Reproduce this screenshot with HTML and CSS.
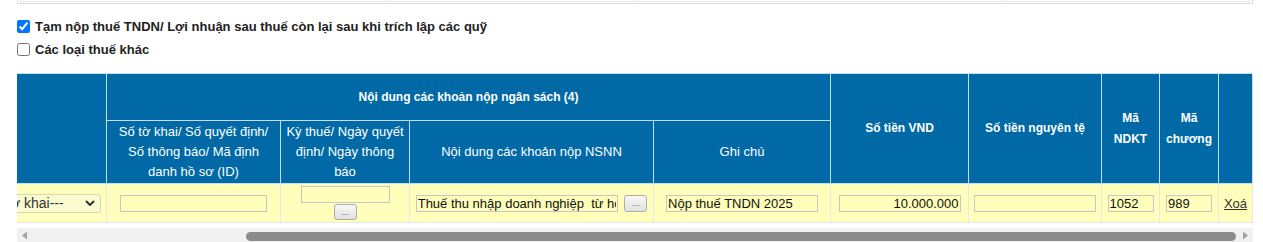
FILE: index.html
```html
<!DOCTYPE html>
<html lang="vi">
<head>
  <meta charset="UTF-8" />
  <title>Nộp thuế</title>
  <link rel="stylesheet" href="styles.css">
</head>
<body>
  <div class="page">
    <div class="prev-table">
      <div class="prev-cell c-a"></div>
      <div class="prev-cell c-b"></div>
      <div class="prev-cell c-c"></div>
      <div class="prev-cell c-d"></div>
    </div>

    <div class="options">
      <label class="opt"><input type="checkbox" checked> Tạm nộp thuế TNDN/ Lợi nhuận sau thuế còn lại sau khi trích lập các quỹ</label>
      <label class="opt"><input type="checkbox"> Các loại thuế khác</label>
    </div>

    <div class="grid-wrap">
      <table class="grid">
        <colgroup>
          <col style="width:40px">
          <col style="width:320px">
          <col style="width:174px">
          <col style="width:129px">
          <col style="width:244px">
          <col style="width:177px">
          <col style="width:138px">
          <col style="width:133px">
          <col style="width:58px">
          <col style="width:59px">
          <col style="width:34px">
        </colgroup>
        <thead>
          <tr class="head-top">
            <th rowspan="2" class="bold">STT</th>
            <th rowspan="2" class="bold"></th>
            <th colspan="4" class="bold">Nội dung các khoản nộp ngân sách (4)</th>
            <th rowspan="2" class="bold">Số tiền VND</th>
            <th rowspan="2" class="bold">Số tiền nguyên tệ</th>
            <th rowspan="2" class="bold">Mã<br>NDKT</th>
            <th rowspan="2" class="bold">Mã<br>chương</th>
            <th rowspan="2"></th>
          </tr>
          <tr class="head-sub">
            <th class="th-id">Số tờ khai/ Số quyết định/ Số thông báo/ Mã định danh hồ sơ (ID)</th>
            <th>Kỳ thuế/ Ngày quyết định/ Ngày thông báo</th>
            <th>Nội dung các khoản nộp NSNN</th>
            <th>Ghi chú</th>
          </tr>
        </thead>
        <tbody>
          <tr class="data-row">
            <td>1</td>
            <td class="cell-type">
              <select class="type-select">
                <option>---Chọn loại tờ khai---</option>
              </select>
            </td>
            <td><input class="field w-id" type="text" value=""></td>
            <td class="cell-period">
              <input class="field w-period" type="text" value="">
              <button class="pick" type="button">...</button>
            </td>
            <td class="cell-content">
              <input class="field w-content" type="text" value="Thuế thu nhập doanh nghiệp  từ hoạt động sản xuất kinh doanh">
              <button class="pick" type="button">...</button>
            </td>
            <td><input class="field w-note" type="text" value="Nộp thuế TNDN 2025"></td>
            <td><input class="field w-money num" type="text" value="10.000.000"></td>
            <td><input class="field w-money" type="text" value=""></td>
            <td><input class="field w-code" type="text" value="1052"></td>
            <td><input class="field w-code" type="text" value="989"></td>
            <td><a href="#" class="del-link">Xoá</a></td>
          </tr>
        </tbody>
      </table>
    </div>

    <div class="hscroll">
      <span class="sb-arrow">
        <svg width="15" height="15" viewBox="0 0 15 15"><path d="M5 7.5 L10 3.5 L10 11.5 Z" fill="#a3a3a3"/></svg>
      </span>
      <div class="sb-track">
        <div class="sb-thumb"></div>
      </div>
      <span class="sb-arrow">
        <svg width="15" height="15" viewBox="0 0 15 15"><path d="M10 7.5 L5 3.5 L5 11.5 Z" fill="#a3a3a3"/></svg>
      </span>
    </div>
  </div>

  <script src="script.js"></script>
</body>
</html>
```

FILE: styles.css
```css
body {
  margin: 0;
  font-family: "Liberation Sans", Arial, sans-serif;
  font-size: 13px;
  color: #222;
  background: #fff;
}

.page {
  padding: 0 10px 0 17px;
}

/* bottom edge of the block above */
.prev-table {
  display: flex;
  gap: 2px;
  padding: 0 2px 1px 2px;
  border: 1px solid #dcdcdc;
  border-top: 0;
  width: 1230px;
}

.prev-cell {
  height: 1px;
  border: 1px solid #e8e8e8;
  border-top: 0;
}

.c-a { width: 365px; }
.c-b { width: 243px; }
.c-c { width: 366px; }
.c-d { flex: 1; }

.options {
  padding-top: 11px;
}

.opt {
  display: flex;
  align-items: center;
  height: 23px;
  font-weight: bold;
  color: #222;
}

.opt input {
  width: 13px;
  height: 13px;
  margin: 0 5px 0 0;
}

.grid-wrap {
  margin-top: 12px;
  overflow-x: auto;
  scrollbar-width: none;
  padding-bottom: 5px;
  width: 1236px;
}

.grid {
  width: 1506px;
  table-layout: fixed;
  border-collapse: collapse;
}

.grid th {
  background: #0069a6;
  color: #fff;
  font-weight: normal;
  font-size: 13px;
  line-height: 20px;
  border: 1px solid #c2e0f5;
  padding: 1px 3px;
  text-align: center;
  vertical-align: middle;
}

.grid th.th-id {
  padding: 1px 8px;
}

.grid th.bold {
  font-weight: bold;
  font-size: 12px;
  line-height: 21px;
}

.head-top th {
  height: 44px;
}

.head-sub th {
  height: 60px;
}

.grid td {
  background: #ffffbb;
  border: 1px solid #e3e8ea;
  height: 38px;
  padding: 0 3px;
  text-align: center;
  vertical-align: middle;
  white-space: nowrap;
}

.grid td.cell-type {
  text-align: right;
  padding-right: 5px;
}

.type-select {
  appearance: none;
  -webkit-appearance: none;
  height: 19px;
  padding: 0 36px 0 4px;
  font-family: "Liberation Sans", Arial, sans-serif;
  font-size: 14px;
  color: #333;
  background: #fbfbd0 url("data:image/svg+xml;utf8,<svg xmlns='http://www.w3.org/2000/svg' width='10' height='6'><path d='M1 1 L5 5 L9 1' fill='none' stroke='%23333' stroke-width='2'/></svg>") no-repeat right 5px center;
  border: 1px solid #d6d6b8;
  border-radius: 3px;
}

.field {
  box-sizing: border-box;
  height: 17px;
  padding: 0 1px;
  margin: 0;
  font-family: "Liberation Sans", Arial, sans-serif;
  font-size: 13px;
  color: #111;
  background: transparent;
  border: 1px solid #c6c6c6;
  vertical-align: middle;
}

.field.num {
  text-align: right;
}

.w-id { width: 147px; }
.w-period { width: 89px; display: block; margin: 0 auto 1px; }
.w-content { width: 202px; }
.w-note { width: 152px; }
.w-money { width: 122px; }
.w-code { width: 46px; }

.pick {
  box-sizing: border-box;
  width: 23px;
  height: 17px;
  padding: 0;
  margin: 0 0 0 3px;
  font-size: 9px;
  line-height: 12px;
  color: #555;
  background: linear-gradient(#f7f7f7, #e1e1e1);
  border: 1px solid #acacac;
  border-radius: 3px;
  vertical-align: middle;
}

.cell-period .pick {
  height: 16px;
  margin: 0;
}

.del-link {
  color: #333;
  text-decoration: underline;
}

/* horizontal scrollbar under the grid */
.hscroll {
  display: flex;
  width: 1236px;
  height: 15px;
  background: #f1f1f1;
}

.sb-arrow {
  display: flex;
  width: 15px;
  height: 15px;
}

.sb-track {
  flex: 1;
  padding: 4px 0 0 214px;
}

.sb-thumb {
  width: 990px;
  height: 9px;
  background: #8b8b8b;
  border-radius: 5px;
}
```

FILE: script.js
```js
document.addEventListener("DOMContentLoaded", function () {
  const wrap = document.querySelector(".grid-wrap");
  // show the right-hand part of the grid, as after scrolling
  wrap.scrollLeft = wrap.scrollWidth;
});
```
